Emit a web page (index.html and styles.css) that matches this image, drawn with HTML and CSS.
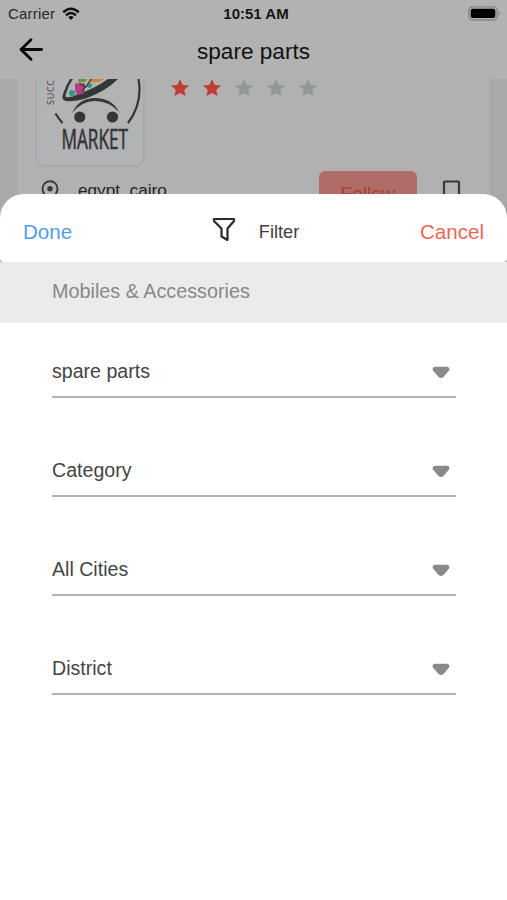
FILE: index.html
```html
<!DOCTYPE html>
<html lang="en">
<head>
<meta charset="utf-8">
<title>spare parts</title>
<link rel="stylesheet" href="styles.css">
</head>
<body>
<div class="screen">
  <header class="statusbar">
    <div class="carrier"><span>Carrier</span>
      <svg width="18" height="14" viewBox="0 0 18 14" fill="none" stroke="#101010" stroke-width="2.500"><path d="M1.200 5.200Q9-1.800 16.800 5.200M4 8.300Q9 3.700 14 8.300"/><path d="M6.200 10.200Q9 8 11.800 10.200L9 13Z" fill="#101010" stroke="none"/></svg>
    </div>
    <span class="time">10:51 AM</span>
    <svg class="battery" width="33" height="15" viewBox="0 0 33 15"><rect x=".8" y=".8" width="28.400" height="13.200" rx="4" fill="none" stroke="#858585" stroke-width="1.300"/><rect x="2.700" y="2.800" width="24.600" height="9.200" rx="2" fill="#000"/><path d="M30.600 5q2.200 2.400 0 4.800z" fill="#7d7d7d"/></svg>
  </header>
  <nav class="navbar">
    <svg width="26" height="26" viewBox="0 0 26 26" fill="none" stroke="#080808" stroke-width="2.900" stroke-linecap="round" stroke-linejoin="round"><path d="M23.500 12.500H3M13 2.700L3 12.500l10 9.800"/></svg>
    <h1>spare parts</h1>
  </nav>
  <main class="backdrop">
    <article class="store">
      <div class="summary">
        <div class="logo">
          <svg width="106" height="86" viewBox="36 79 106 86">
            <path d="M69 79h48q-12 12-31 19-14 4-21 3-5-1-3-7 3-9 7-15z" fill="#343638"/>
            <path d="M72 79h35q-14 10-30 15-8 4-12 3-1-2 1-6 2-7 6-12z" fill="#b0b2b3"/>
            <path d="M74 83l4 1 5-1 2 3-3 8-6 1-2-5z" fill="#b33f80"/><path d="M88 79h15l-5 3h-9z" fill="#cb8627"/><path d="M77 79h9l-2 3h-7z" fill="#71943d"/><circle cx="71" cy="93" r="3" fill="#2d9b80"/><circle cx="88.500" cy="85.500" r="2.400" fill="#2d9b80"/>
            <path d="M78 83l7 4 5-8M84 87l-3 5" fill="none" stroke="#343638" stroke-width="1.200"/>
            <path d="M71 113q7-15 23-15 17 0 24 14-10-11-24-11-13 0-23 12z" fill="#343638"/>
            <circle cx="78.800" cy="117" r="5.600" fill="#343638"/><circle cx="111.500" cy="117" r="5.600" fill="#343638"/>
            <path d="M54.500 113.500q3 5 7 9.500M137.500 79q4.500 24-10.500 44" fill="none" stroke="#343638" stroke-width="2.200"/>
            <text x="60.500" y="148.500" textLength="66.500" lengthAdjust="spacingAndGlyphs" class="logo-name">MARKET</text>
            <text transform="translate(53 105) rotate(-90)" textLength="25" class="logo-side">SUCC</text>
          </svg>
        </div>
        <div class="stars">
          <svg viewBox="0 0 20 20"><path d="M10 1l2.600 5.900 6.400.7-4.800 4.300 1.400 6.300L10 15l-5.600 3.200 1.400-6.300L1 7.600l6.400-.7z"/></svg>
          <svg viewBox="0 0 20 20"><path d="M10 1l2.600 5.900 6.400.7-4.800 4.300 1.400 6.300L10 15l-5.600 3.200 1.400-6.300L1 7.600l6.400-.7z"/></svg>
          <svg class="off" viewBox="0 0 20 20"><path d="M10 1l2.600 5.900 6.400.7-4.800 4.300 1.400 6.300L10 15l-5.600 3.200 1.400-6.300L1 7.600l6.400-.7z"/></svg>
          <svg class="off" viewBox="0 0 20 20"><path d="M10 1l2.600 5.900 6.400.7-4.800 4.300 1.400 6.300L10 15l-5.600 3.200 1.400-6.300L1 7.600l6.400-.7z"/></svg>
          <svg class="off" viewBox="0 0 20 20"><path d="M10 1l2.600 5.900 6.400.7-4.800 4.300 1.400 6.300L10 15l-5.600 3.200 1.400-6.300L1 7.600l6.400-.7z"/></svg>
        </div>
      </div>
      <div class="details">
        <svg class="pin" width="18" height="24" viewBox="0 0 18 24"><path d="M9 1.200a7.500 7.500 0 0 1 7.500 7.500c0 5-7.500 13-7.500 13S1.500 13.700 1.500 8.700A7.500 7.500 0 0 1 9 1.200z" fill="none" stroke="#38393b" stroke-width="1.900"/><circle cx="9" cy="8.700" r="2.700" fill="#38393b"/></svg>
        <span class="place">egypt, cairo</span>
        <div class="follow">Follow</div>
        <svg class="bookmark" width="20" height="26" viewBox="0 0 20 26"><path d="M2 24V2.500q0-1 1-1h13q1 0 1 1V24l-7.500-6z" fill="none" stroke="#37393b" stroke-width="2.200"/></svg>
      </div>
    </article>
  </main>
  <section class="sheet">
    <div class="sheet-head">
      <span class="done">Done</span>
      <div class="title">
        <svg width="24" height="25" viewBox="0 0 24 25" fill="none" stroke="#292929" stroke-width="2.200" stroke-linejoin="round"><path d="M2 2h20v2l-6.500 7.500V23l-6-3.500v-8L2 4z"/></svg>
        <span>Filter</span>
      </div>
      <span class="cancel">Cancel</span>
    </div>
    <div class="group">Mobiles &amp; Accessories</div>
    <div class="fields">
      <div class="field"><span>spare parts</span><svg width="18" height="13" viewBox="0 0 18 13"><path d="M3 .8h12q3.500.7 2 3.700L11.500 11Q9 13.200 6.500 11L1 4.500Q-.5 1.500 3 .8z"/></svg></div>
      <div class="field"><span>Category</span><svg width="18" height="13" viewBox="0 0 18 13"><path d="M3 .8h12q3.500.7 2 3.700L11.500 11Q9 13.200 6.500 11L1 4.500Q-.5 1.500 3 .8z"/></svg></div>
      <div class="field"><span>All Cities</span><svg width="18" height="13" viewBox="0 0 18 13"><path d="M3 .8h12q3.500.7 2 3.700L11.500 11Q9 13.200 6.500 11L1 4.500Q-.5 1.500 3 .8z"/></svg></div>
      <div class="field"><span>District</span><svg width="18" height="13" viewBox="0 0 18 13"><path d="M3 .8h12q3.500.7 2 3.700L11.500 11Q9 13.200 6.500 11L1 4.500Q-.5 1.500 3 .8z"/></svg></div>
    </div>
  </section>
</div>
</body>
</html>
```
FILE: styles.css
```css
* { box-sizing: border-box; }
body { margin: 0; font-family: "Liberation Sans", Arial, sans-serif; }
svg { display: block; flex: none; }
.screen { position: relative; width: 507px; height: 900px; overflow: hidden; background: #b2b2b2; }
.statusbar { display: grid; grid-template-columns: 1fr auto 1fr; align-items: center; height: 27px; padding: 0 6px 0 8px; }
.carrier { display: flex; align-items: center; gap: 7px; font-size: 15px; letter-spacing: .2px; color: #292929; }
.time { padding-left: 3px; font-size: 15px; font-weight: 700; color: #151515; }
.battery { justify-self: end; }
.navbar { display: grid; grid-template-columns: 26px 1fr 26px; height: 52px; padding: 10px 18px 0; }
.navbar h1 { margin: 0; padding-top: 2px; font-size: 22.600px; font-weight: 400; line-height: 26px; text-align: center; color: #111; }
.backdrop { height: 190px; padding: 0 17px 0 18px; background: #a9a9a9; }
.store { height: 190px; padding-left: 17px; background: #b1b1b1; }
.summary { display: flex; align-items: flex-start; gap: 25px; height: 92px; }
.logo { width: 110px; height: 88px; border: 2px solid #a8a8a8; border-top: 0; border-radius: 0 0 10px 10px; background: #b2b3b4; }
.logo-name { font: 26.500px "Open Sans", sans-serif; fill: #343638; stroke: #343638; stroke-width: .7px; }
.logo-side { font: 9px "Open Sans", sans-serif; fill: #434547; }
.stars { display: flex; gap: 12px; }
.stars svg { width: 20px; height: 20px; margin-top: -1px; fill: #bd3f34; }
.stars .off { fill: #8e979a; }
.details { display: flex; align-items: flex-start; }
.pin { margin: 9px 0 0 6px; }
.place { width: 241px; margin: 8px 0 0 19px; font-size: 17.200px; line-height: 22px; color: #232323; }
.follow { width: 98px; height: 44px; padding-top: 11px; border-radius: 6px; background: #b06c69; color: #b33c36; font-size: 19px; line-height: 24px; text-align: center; }
.bookmark { margin: 9px 0 0 25px; }
.sheet { position: absolute; top: 194px; left: 0; width: 507px; height: 706px; }
.sheet-head { display: grid; grid-template-columns: 1fr auto 1fr; align-items: center; height: 68px; padding: 7px 23px 0 23px; border-radius: 24px 24px 4px 4px; background: #fff; font-size: 20.600px; }
.done { color: #579bee; }
.cancel { color: #ee6655; text-align: right; }
.title { display: flex; align-items: center; gap: 23px; padding: 1px 0 0 4px; color: #414141; font-size: 18.200px; }
.title svg { margin-top: -6px; }
.group { height: 61px; padding-left: 52px; background: #ebebeb; color: #888; font-size: 19.800px; line-height: 59px; }
.fields { height: 577px; padding: 22px 51px 0 52px; background: #fff; }
.field { display: flex; justify-content: space-between; align-items: center; height: 53px; margin-bottom: 46px; padding: 1px 6px 0 0; border-bottom: 2px solid #b2b2b2; color: #444; font-size: 19.600px; }
.field svg { margin-top: 2px; fill: #8a8a8a; }
```
